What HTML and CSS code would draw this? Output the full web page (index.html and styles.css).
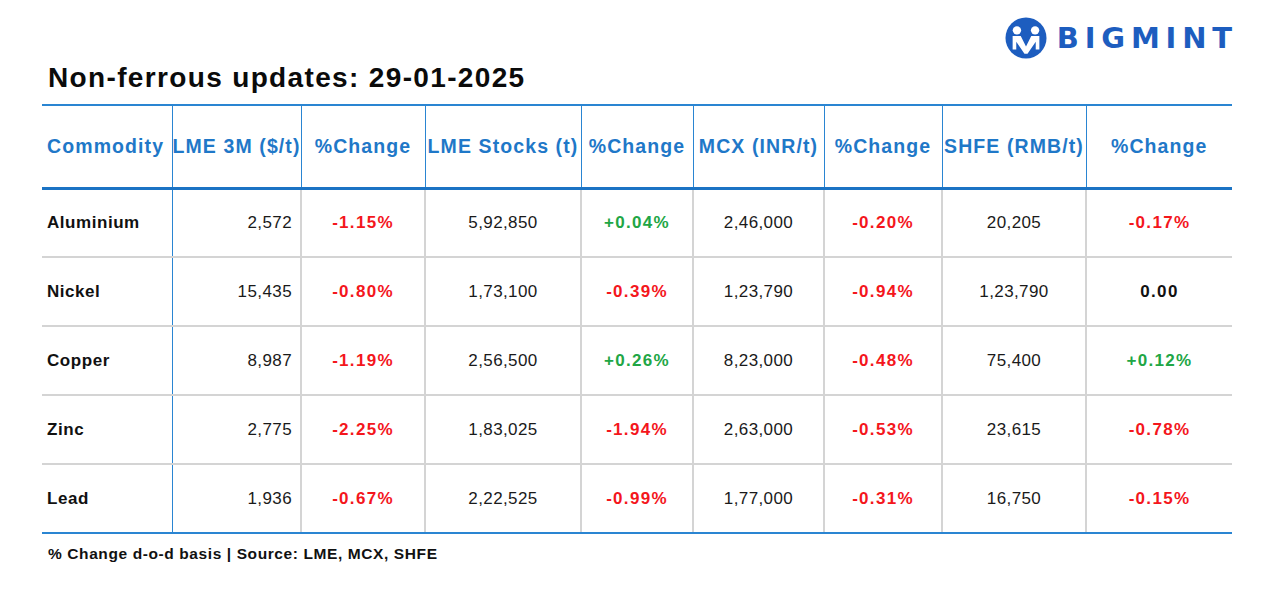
FILE: index.html
```html
<!DOCTYPE html>
<html>
<head>
<meta charset="utf-8">
<link rel="stylesheet" href="styles.css">
</head>
<body>
<div class="page">
  <div class="brand">
    <svg class="brand-icon" viewBox="0 0 44 44" width="42" height="42">
      <circle cx="22" cy="22" r="21.5" fill="#1d5dbf"/>
      <circle cx="12.5" cy="14" r="4.4" fill="#fff"/>
      <circle cx="31.5" cy="14" r="4.4" fill="#fff"/>
      <path d="M8 20 H16.5 L22 31 L27.5 20 H36 V34 H32.2 V26 L23.6 38.5 H20.4 L11.8 26 V34 H8 Z" fill="#fff"/>
      <rect x="13.6" y="36" width="2.2" height="5" fill="#1d5dbf"/>
      <rect x="28.2" y="36" width="2.2" height="5" fill="#1d5dbf"/>
    </svg>
    <span class="brand-name">BIGMINT</span>
  </div>
  <h1 class="title">Non-ferrous updates: 29-01-2025</h1>
  <table class="grid">
    <colgroup>
      <col style="width:130px"><col style="width:129px"><col style="width:124px">
      <col style="width:156px"><col style="width:112px"><col style="width:131px">
      <col style="width:118px"><col style="width:144px"><col style="width:146px">
    </colgroup>
    <thead>
      <tr>
        <th class="first">Commodity</th>
        <th>LME 3M ($/t)</th>
        <th>%Change</th>
        <th>LME Stocks (t)</th>
        <th>%Change</th>
        <th>MCX (INR/t)</th>
        <th>%Change</th>
        <th>SHFE (RMB/t)</th>
        <th>%Change</th>
      </tr>
    </thead>
    <tbody>
      <tr>
        <td class="name">Aluminium</td><td class="num">2,572</td><td class="neg">-1.15%</td>
        <td>5,92,850</td><td class="pos">+0.04%</td><td>2,46,000</td><td class="neg">-0.20%</td>
        <td>20,205</td><td class="neg">-0.17%</td>
      </tr>
      <tr>
        <td class="name">Nickel</td><td class="num">15,435</td><td class="neg">-0.80%</td>
        <td>1,73,100</td><td class="neg">-0.39%</td><td>1,23,790</td><td class="neg">-0.94%</td>
        <td>1,23,790</td><td class="zero">0.00</td>
      </tr>
      <tr>
        <td class="name">Copper</td><td class="num">8,987</td><td class="neg">-1.19%</td>
        <td>2,56,500</td><td class="pos">+0.26%</td><td>8,23,000</td><td class="neg">-0.48%</td>
        <td>75,400</td><td class="pos">+0.12%</td>
      </tr>
      <tr>
        <td class="name">Zinc</td><td class="num">2,775</td><td class="neg">-2.25%</td>
        <td>1,83,025</td><td class="neg">-1.94%</td><td>2,63,000</td><td class="neg">-0.53%</td>
        <td>23,615</td><td class="neg">-0.78%</td>
      </tr>
      <tr>
        <td class="name">Lead</td><td class="num">1,936</td><td class="neg">-0.67%</td>
        <td>2,22,525</td><td class="neg">-0.99%</td><td>1,77,000</td><td class="neg">-0.31%</td>
        <td>16,750</td><td class="neg">-0.15%</td>
      </tr>
    </tbody>
  </table>
  <p class="note">% Change d-o-d basis | Source: LME, MCX, SHFE</p>
</div>
</body>
</html>
```
FILE: styles.css
```css
* { box-sizing: border-box; }
html, body { margin: 0; padding: 0; background: #fff; }
body { font-family: "Liberation Sans", Arial, sans-serif; color: #111; }
.page { position: relative; width: 1281px; height: 600px; padding: 0 49px 0 42px; }
.brand {
  display: flex; justify-content: flex-end; align-items: center;
  gap: 10px; height: 60px; padding-top: 16px;
}
.brand-icon { display: block; }
.brand-name {
  font-family: "DejaVu Sans", "Liberation Sans", sans-serif;
  font-weight: bold; font-size: 29px; letter-spacing: 5.8px; color: #1d5dbf;
  margin-right: -5.8px; line-height: 1;
}
.title {
  margin: 0; padding-left: 6px; height: 44px;
  font-size: 28px; font-weight: bold; color: #0b0b0b; line-height: 36px;
  letter-spacing: 1.35px;
}
.grid { border-collapse: collapse; table-layout: fixed; width: 1190px; }
.grid th {
  height: 83px; color: #1f78c8; font-size: 19.5px; font-weight: bold;
  text-align: center; padding: 0; white-space: nowrap;
  border-left: 1.5px solid #2a85d2; border-top: 2px solid #2a85d2;
  border-bottom: 3px solid #1b73c4;
  letter-spacing: 1.1px;
}
.grid th.first { border-left: none; text-align: left; padding-left: 5px; }
.grid td {
  height: 69px; text-align: center; font-size: 17px; padding: 0;
  border-left: 2px solid #d4d4d4; border-bottom: 2px solid #d4d4d4;
  color: #1a1a1a; letter-spacing: 0.4px;
}
.grid td.name {
  border-left: none; border-right: 1.5px solid #2a85d2;
  text-align: left; padding-left: 5px; font-weight: bold; color: #111;
  letter-spacing: 0.55px;
}
.grid td.num { text-align: right; padding-right: 8px; border-left: none; }
.grid td.neg { color: #f4161c; font-weight: bold; letter-spacing: 1.3px; }
.grid td.pos { color: #21a645; font-weight: bold; letter-spacing: 1.3px; }
.grid td.zero { font-weight: bold; color: #111; letter-spacing: 1.3px; }
.grid tbody tr:last-child td { border-bottom: 2px solid #2a85d2; }
.note {
  margin: 11px 0 0 6px; font-size: 15.5px; font-weight: bold; color: #111;
  letter-spacing: 0.6px;
}
```
